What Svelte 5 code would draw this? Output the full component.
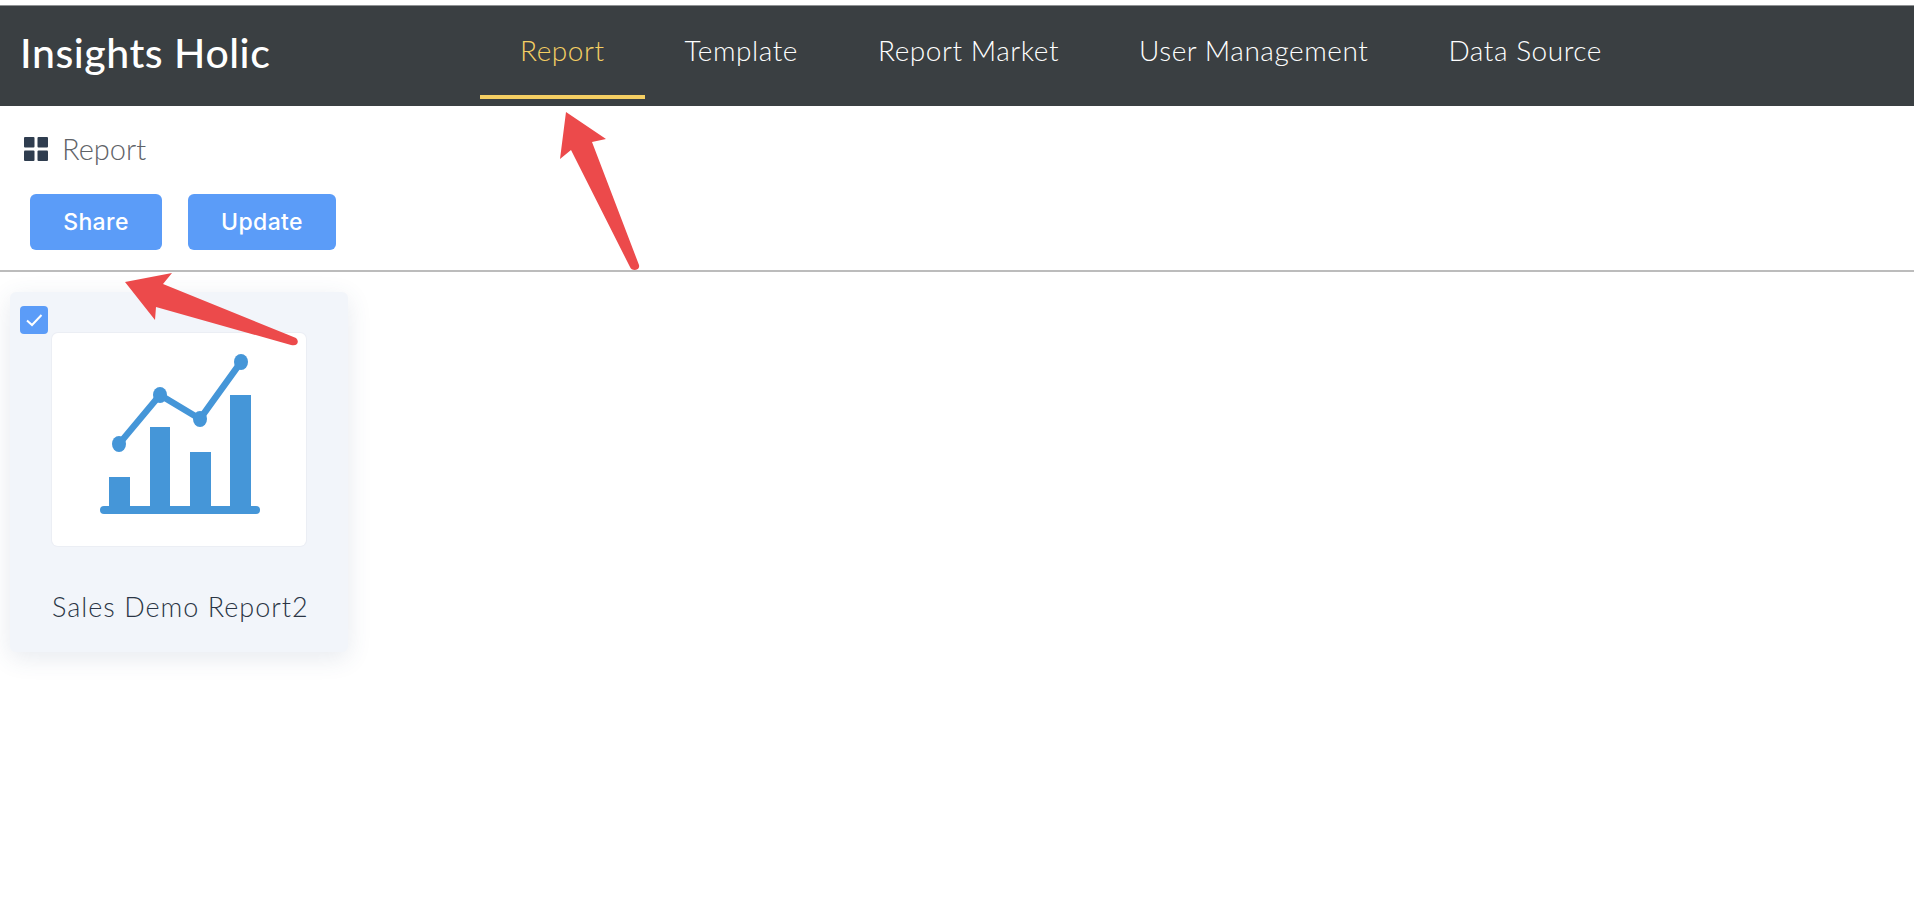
<script lang="ts">
	const tabs = ['Report', 'Template', 'Report Market', 'User Management', 'Data Source'];
	let active = $state('Report');
	let checked = $state(true);
</script>

<div class="page">
	<header class="topbar">
		<div class="logo">Insights Holic</div>
		<nav class="tabs">
			{#each tabs as tab}
				<button class="tab" class:active={tab === active} onclick={() => (active = tab)}>{tab}</button>
			{/each}
		</nav>
	</header>

	<div class="crumb">
		<svg class="crumb__icon" viewBox="0 0 24 24" aria-hidden="true">
			<rect x="0" y="0" width="10.5" height="10.5" rx="1" />
			<rect x="13.5" y="0" width="10.5" height="10.5" rx="1" />
			<rect x="0" y="13.5" width="10.5" height="10.5" rx="1" />
			<rect x="13.5" y="13.5" width="10.5" height="10.5" rx="1" />
		</svg>
		<span>Report</span>
	</div>

	<div class="actions">
		<button class="btn btn--share">Share</button>
		<button class="btn btn--update">Update</button>
	</div>

	<div class="content">
		<article class="card">
			<button class="check" class:on={checked} aria-label="Select report" onclick={() => (checked = !checked)}>
				{#if checked}
					<svg viewBox="0 0 28 28" aria-hidden="true"><path d="M7 14.5l5 4.5 9.5-10" /></svg>
				{/if}
			</button>
			<div class="thumb">
				<svg class="chart" viewBox="0 0 254 213" aria-hidden="true">
					<rect x="57" y="144" width="21" height="32" />
					<rect x="98" y="94" width="20" height="82" />
					<rect x="138" y="119" width="21" height="57" />
					<rect x="178" y="62" width="21" height="114" />
					<rect x="48" y="173" width="160" height="8" rx="4" />
					<polyline points="67,111 108,62 148,86 189,29" />
					<ellipse cx="67" cy="111" rx="7" ry="8" />
					<ellipse cx="108" cy="62" rx="7" ry="8" />
					<ellipse cx="148" cy="86" rx="7" ry="8" />
					<ellipse cx="189" cy="29" rx="7" ry="8" />
				</svg>
			</div>
			<div class="card__title">Sales Demo Report2</div>
		</article>
	</div>

	<!-- red annotation arrows drawn over the screenshot -->
	<svg class="arrows" viewBox="0 0 1914 900" aria-hidden="true">
		<path d="M566 112 L606 139 L592 142 L639 265 Q640 269 635 270 Q631 270 630 267 L571 150 L560 159 Z" />
		<path d="M125 282 L172 273 L163 284 L296 338 Q299 341 297 344 Q295 346 291 345 L156 307 L155 320 Z" />
	</svg>
</div>

<style>
	:global(body) {
		margin: 0;
		background: #fff;
	}

	.page {
		position: relative;
		width: 1914px;
		height: 900px;
		overflow: hidden;
		padding-top: 5px;
		box-sizing: border-box;
		background: #fff;
		font-family: Lato, 'Open Sans', sans-serif;
	}

	.topbar {
		display: flex;
		height: 101px;
		padding-left: 20px;
		box-sizing: border-box;
		background: #3a3f42;
		border-top: 1px solid #8f9294;
		color: #fff;
	}

	.logo {
		width: 460px;
		font-size: 41px;
		line-height: 94px;
		font-weight: 500;
		letter-spacing: 0.55px;
	}

	.tabs {
		display: flex;
		height: 93px;
	}

	.tab {
		height: 93px;
		padding: 0 40px 2px;
		border: 0;
		border-bottom: 4px solid transparent;
		background: none;
		color: #fff;
		font: 300 28px Lato, 'Open Sans', sans-serif;
		letter-spacing: 0.55px;
		cursor: pointer;
	}

	.tab.active {
		color: #f5cf63;
		border-bottom-color: #f5cf63;
	}

	.crumb {
		display: flex;
		align-items: center;
		gap: 14px;
		height: 32px;
		margin-top: 26px;
		padding-left: 24px;
		color: #5f6368;
		font-size: 29px;
		font-weight: 300;
	}

	.crumb__icon {
		width: 24px;
		height: 24px;
		margin-top: 2px;
		fill: #2f3d4f;
	}

	.actions {
		display: flex;
		gap: 26px;
		margin-top: 30px;
		padding-left: 30px;
	}

	.btn {
		height: 56px;
		border: 0;
		border-radius: 6px;
		background: #5b9cf8;
		color: #fff;
		font: 500 23px Inter, Roboto, sans-serif;
		letter-spacing: 0.4px;
		cursor: pointer;
	}

	.btn--share {
		width: 132px;
	}

	.btn--update {
		width: 148px;
	}

	.content {
		margin-top: 20px;
		padding: 20px 10px;
		border-top: 2px solid #bcbcbc;
	}

	.card {
		position: relative;
		width: 338px;
		height: 360px;
		padding: 41px 42px 0;
		box-sizing: border-box;
		border-radius: 6px;
		background: #f2f5fa;
		box-shadow: 0 6px 24px rgba(60, 80, 120, 0.12);
	}

	.check {
		position: absolute;
		top: 14px;
		left: 10px;
		width: 28px;
		height: 28px;
		padding: 0;
		border: 0;
		border-radius: 4px;
		background: #5b9cf8;
		cursor: pointer;
	}

	.check svg {
		display: block;
		fill: none;
		stroke: #fff;
		stroke-width: 2;
	}

	.thumb {
		width: 254px;
		height: 213px;
		box-sizing: border-box;
		border-radius: 6px;
		background: #fff;
		box-shadow: 0 0 0 1px #ebeef4;
	}

	.chart {
		display: block;
		width: 254px;
		height: 213px;
		fill: #4596d8;
	}

	.chart polyline {
		fill: none;
		stroke: #4596d8;
		stroke-width: 6.5;
	}

	.card__title {
		margin-top: 45px;
		text-align: center;
		color: #2b3545;
		font-size: 27px;
		font-weight: 300;
		line-height: 32px;
		letter-spacing: 1px;
		white-space: nowrap;
	}

	.arrows {
		position: absolute;
		top: 0;
		left: 0;
		width: 1914px;
		height: 900px;
		fill: #ec4a4b;
		pointer-events: none;
	}
</style>
